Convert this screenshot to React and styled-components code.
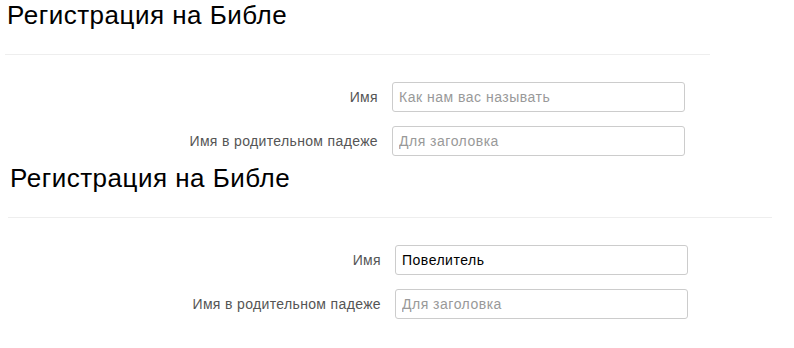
import styled, { createGlobalStyle } from 'styled-components';

const GlobalStyle = createGlobalStyle`
    body {
        margin: 0;
        background: #fff;
        font-family: "Liberation Sans", Arial, sans-serif;
    }
`;

const Panel = styled.section`
    margin-left: ${(p) => p.$left}px;
    width: ${(p) => p.$width}px;
    padding-bottom: 7px;
`;

const Title = styled.h1`
    margin: 0 0 0 2px;
    font-size: 26px;
    line-height: 30px;
    letter-spacing: 0.5px;
    font-weight: normal;
    color: #000;
`;

const Divider = styled.hr`
    margin: 24px 0 27px;
    border: 0;
    border-top: 1px solid #eee;
`;

const Form = styled.form`
    display: flex;
    flex-direction: column;
    gap: 14px;
`;

const Row = styled.div`
    display: grid;
    grid-template-columns: 373px 293px;
    column-gap: 14px;
    align-items: center;
`;

const Label = styled.label`
    text-align: right;
    font-size: 14px;
    letter-spacing: 0.35px;
    color: #555;
`;

const Input = styled.input`
    box-sizing: border-box;
    height: 30px;
    padding: 0 6px;
    border: 1px solid #ccc;
    border-radius: 3px;
    font-family: "Liberation Sans", Arial, sans-serif;
    font-size: 14px;
    letter-spacing: 0.5px;
    color: #000;
    outline: none;

    &::placeholder {
        color: #999;
    }
`;

function RegisterForm({ left, width, name }) {
    return (
        <Panel $left={left} $width={width}>
            <Title>Регистрация на Библе</Title>
            <Divider />
            <Form>
                <Row>
                    <Label>Имя</Label>
                    <Input placeholder="Как нам вас называть" defaultValue={name} />
                </Row>
                <Row>
                    <Label>Имя в родительном падеже</Label>
                    <Input placeholder="Для заголовка" />
                </Row>
            </Form>
        </Panel>
    );
}

export default function App() {
    return (
        <>
            <GlobalStyle />
            <RegisterForm left={5} width={705} />
            <RegisterForm left={8} width={764} name="Повелитель" />
        </>
    );
}
